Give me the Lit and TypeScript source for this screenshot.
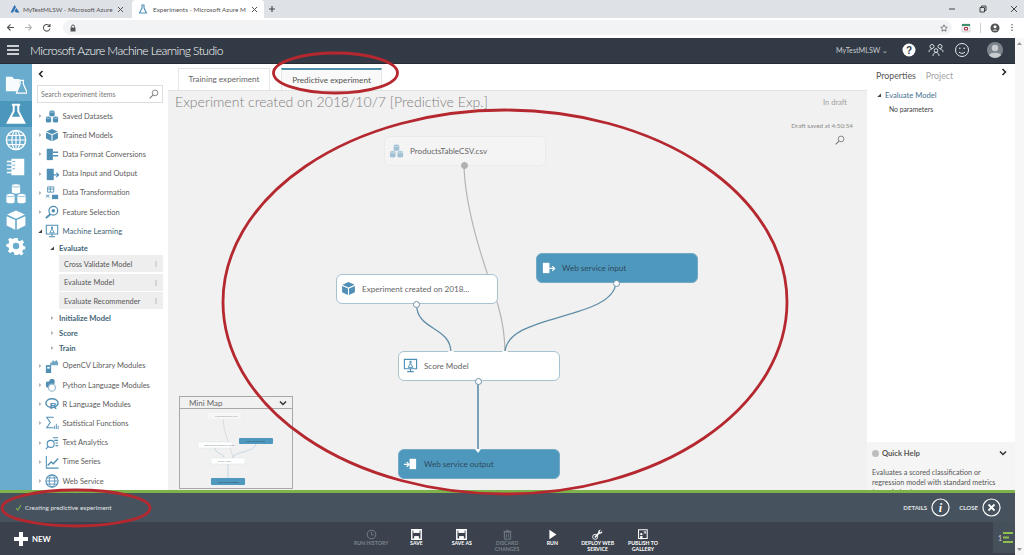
import { LitElement, html, css, svg } from "lit";
import { customElement } from "lit/decorators.js";

const B = "#4f8fb5";
const cyl = (x: number, y: number, c: string, s = "#fff") => svg`<path d="M${x} ${y+1.5}v5c0 1.2 6 1.2 6 0v-5z" fill="${c}"/><ellipse cx="${x+3}" cy="${y+1.5}" rx="3" ry="1.2" fill="${c}" stroke="${s}" stroke-width=".5"/>`;
const cube = (c: string) => svg`<path d="M8 1l6.500 3L8 7 1.500 4z" fill="${c}"/><path d="M1.200 5.200L7.400 8v7l-6.200-3zM14.800 5.200L8.600 8v7l6.200-3z" fill="${c}"/>`;
const pIcons: Record<string, any> = {
  datasets: svg`${cyl(5,1,B)}${cyl(1,8,B)}${cyl(9,8,B)}`,
  cube: cube(B),
  format: svg`<path d="M2 2h7v13H2z" fill="${B}"/><path d="M9 6h6M9 10h6" stroke="${B}" stroke-width="1.500"/>`,
  io: svg`<path d="M2 2h8v13H2z" fill="${B}"/><path d="M9 9h6m-2-2.500l2.500 2.500-2.500 2.500" fill="none" stroke="${B}" stroke-width="1.300"/>`,
  transform: svg`<path d="M3 1h7v6H3z" fill="none" stroke="${B}"/><path d="M3 3.500h7M6 1v6M1 13l4-3M1 10l4 3" stroke="${B}"/><path d="M8 10h7v5H8z" fill="${B}"/>`,
  feature: svg`<circle cx="9.500" cy="6.500" r="5" fill="none" stroke="${B}" stroke-width="1.400"/><circle cx="9.500" cy="6.500" r="2" fill="${B}"/><path d="M6 10.500L1 15" stroke="${B}" stroke-width="2.200"/>`,
  ml: svg`<path d="M1.500 1.500h13v10h-13zM8 11.500V14M4.500 14.500h7" fill="none" stroke="${B}" stroke-width="1.200"/><path d="M7 3.500h2M7.500 3.500v3L5.500 10h5l-2-3.500v-3" fill="none" stroke="${B}"/>`,
  opencv: svg`<path d="M1 7h6v9H1z" fill="${B}"/><path d="M6 4h2l1-3 2 2 2-2 2 3v3H6z" fill="${B}" opacity=".8"/><path d="M2.500 9h3v2h-3z" fill="#fff"/>`,
  py: svg`<path d="M8 1c-3 0-3 1.500-3 3H3C1 4 1 6 1 8s1 3 2 3h1.500V9c0-1 1-2 2-2h3c1 0 1.500-1 1.500-2V3c0-1.500-1.500-2-3-2z" fill="${B}"/><circle cx="8" cy="11" r="4" fill="none" stroke="#9bbdd2" stroke-width="1.500"/>`,
  r: svg`<ellipse cx="8" cy="7" rx="7" ry="5" fill="none" stroke="${B}" stroke-width="1.600"/><text x="5.500" y="14" font-size="11" font-weight="700" font-family="Liberation Sans, sans-serif" fill="${B}">R</text>`,
  stat: svg`<path d="M10 1.500H2l4 6-4 6h8" fill="none" stroke="${B}" stroke-width="1.200"/><path d="M11 11v4M13 9v6M15 11v4" stroke="${B}"/>`,
  text: svg`<circle cx="6.500" cy="9" r="4" fill="none" stroke="${B}" stroke-width="1.200"/><path d="M3.500 12L1 15M9 2h6M10.500 5h4.500M12 8h3M12 11h3" stroke="${B}" stroke-width="1.200"/>`,
  time: svg`<path d="M1.500 1v14h14" fill="none" stroke="${B}" stroke-width="1.200"/><path d="M3 12l4-4 2.500 2L15 4" fill="none" stroke="${B}" stroke-width="1.500"/>`,
  globe: svg`<circle cx="8" cy="8" r="7" fill="none" stroke="${B}" stroke-width="1.200"/><ellipse cx="8" cy="8" rx="3.200" ry="7" fill="none" stroke="${B}"/><path d="M1 8h14M2 4.500h12M2 11.500h12" stroke="${B}"/>`,
};
const pIcon = (k: string) => html`<svg class="picon" viewBox="0 0 16 16">${pIcons[k]}</svg>`;

const W = "#fff";
const railIcons = [
  svg`<path d="M1 4h7l2 2.500h6V20H1z" fill="${W}" opacity=".95"/><path d="M15.500 8h5M16.500 8v4L12.500 22h12L20 12V8" fill="#6aaccd" stroke="${W}" stroke-width="1.300"/>`,
  svg`<path d="M7.500 2h9M9.500 2v7L3 21.500h18L14.500 9V2" fill="none" stroke="${W}" stroke-width="2.200"/><path d="M7 15h10l3 6H4z" fill="${W}"/>`,
  svg`<circle cx="12" cy="12" r="10.500" fill="none" stroke="${W}" stroke-width="1.600"/><ellipse cx="12" cy="12" rx="4.500" ry="10.500" fill="none" stroke="${W}" stroke-width="1.300"/><path d="M1.500 12h21M3.500 7h17M3.500 17h17M12 2v20" stroke="${W}" stroke-width="1.300"/>`,
  svg`<path d="M7 3h14v18H7z" fill="${W}"/><path d="M2 6h7M2 10h7M2 14h7M2 18h7" stroke="${W}" stroke-width="1.500"/><path d="M8 6h3M8 10h3M8 14h3" stroke="#6aaccd" stroke-width="1"/>`,
  svg`<g transform="scale(1.500)">${cyl(5,1,W,"#6aaccd")}${cyl(1,8,W,"#6aaccd")}${cyl(9,8,W,"#6aaccd")}</g>`,
  svg`<g transform="scale(1.500)">${cube(W)}</g>`,
  svg`<path d="M10 2h4l.5 3 2.500 1 2.500-1.800 2.500 3-1.800 2.300.8 2.500 2.500.5-.2 3.500-2.800.5-1 2.300 1.800 2.500-2.800 2.500-2.400-1.800-2.500 1L14 23h-4l-.5-3-2.500-1-2.500 1.800-2.700-2.800L3.600 16l-1-2.500L0 13V9.500L2.700 9l1-2.500L2 4.200 4.700 1.600 7 3.400 9.500 2.500z" fill="${W}" transform="translate(1.500 1.500) scale(.88)"/><circle cx="12" cy="12" r="3.500" fill="#6aaccd"/>`,
];

const top1 = [
  ["datasets", "Saved Datasets"], ["cube", "Trained Models"], ["format", "Data Format Conversions"],
  ["io", "Data Input and Output"], ["transform", "Data Transformation"], ["feature", "Feature Selection"],
];
const top2 = [
  ["opencv", "OpenCV Library Modules"], ["py", "Python Language Modules"], ["r", "R Language Modules"],
  ["stat", "Statistical Functions"], ["text", "Text Analytics"], ["time", "Time Series"], ["globe", "Web Service"],
];

const collapsed = html`<svg class="tw" viewBox="0 0 6 6"><path d="M2 1l2.500 2L2 5z" fill="#b5b5b5"/></svg>`;
const open = html`<svg class="tw" viewBox="0 0 6 6"><path d="M5 1.500V5H1.200z" fill="#444"/></svg>`;
const mag = (c: string) => html`<svg class="mag" viewBox="0 0 14 14"><circle cx="8.500" cy="5.500" r="4" fill="none" stroke="${c}" stroke-width="1.200"/><path d="M5.500 8.500L1 13" stroke="${c}" stroke-width="1.500"/></svg>`;
const chevL = html`<svg class="chev" viewBox="0 0 8 8"><path d="M5.500 1L2.500 4l3 3" fill="none" stroke="#222" stroke-width="1.500"/></svg>`;
const chevR = html`<svg class="chev" viewBox="0 0 8 8"><path d="M2.500 1l3 3-3 3" fill="none" stroke="#222" stroke-width="1.500"/></svg>`;
const chevD = html`<svg class="chev" viewBox="0 0 8 8"><path d="M1 2.500l3 3 3-3" fill="none" stroke="#333" stroke-width="1.500"/></svg>`;

const floppy = html`<svg viewBox="0 0 14 14"><path d="M1 1h12v12H1z" fill="none" stroke="#fff" stroke-width="1.800"/><path d="M3 1h8v4H3z" fill="#fff"/><path d="M4 9h6v4H4z" fill="#fff"/></svg>`;
const cmds = [
  { l: ["RUN HISTORY"], dim: true, i: html`<svg viewBox="0 0 14 14"><circle cx="7" cy="7" r="5.500" fill="none" stroke="#79828b" stroke-width="1.200"/><path d="M7 3.500V7.500H10" fill="none" stroke="#79828b"/></svg>` },
  { l: ["SAVE"], i: floppy },
  { l: ["SAVE AS"], i: floppy },
  { l: ["DISCARD", "CHANGES"], dim: true, i: html`<svg viewBox="0 0 14 14"><path d="M3 4h8v9H3zM2 3h10M5.500 1.500h3" fill="none" stroke="#79828b" stroke-width="1.100"/><path d="M5.500 6v5M8.500 6v5" stroke="#79828b"/></svg>` },
  { l: ["RUN"], i: html`<svg viewBox="0 0 14 14"><path d="M3 1l9 6-9 6z" fill="#fff"/></svg>` },
  { l: ["DEPLOY WEB", "SERVICE"], i: html`<svg viewBox="0 0 14 14"><path d="M13 2.500l-2 2-1.500-1.500 2-2c-2-.5-4 1-3.500 3.500L3 10l1.500 1.500L9.500 6c2.500.5 4-1.500 3.500-3.500z" fill="#fff"/><circle cx="4" cy="10" r="3.200" fill="none" stroke="#fff" stroke-width="1.100"/></svg>` },
  { l: ["PUBLISH TO", "GALLERY"], i: html`<svg viewBox="0 0 14 14"><path d="M2 1h11v11H2z" fill="none" stroke="#fff" stroke-width="1.300"/><path d="M4 9h3v4H4z" fill="#fff"/><circle cx="5.500" cy="6.500" r="1.500" fill="#fff"/><path d="M8.500 3.500h2.500V6M11 3.500L8.500 6" stroke="#fff" fill="none"/></svg>` },
];

@customElement("app-root")
export class AppRoot extends LitElement {
  static styles = css`
    :host { display: block; width: 1024px; height: 555px; overflow: hidden; position: relative; background: #fff;
      font-family: Lato, "Noto Sans", sans-serif; color: #555; }
    * { box-sizing: border-box; }
    svg { display: block; }
    .tabstrip { height: 18px; background: #dee1e6; display: flex; align-items: stretch; font-size: 6.400px; color: #555; }
    .btab { width: 132px; display: flex; align-items: center; padding: 0 8px 0 10px; gap: 3px; white-space: nowrap; overflow: hidden; }
    .btab.active { background: #fff; border-radius: 4px 4px 0 0; padding-left: 6px; gap: 5px; }
    .btab span { flex: 1; }
    .btab svg { width: 10px; height: 10px; flex: none; }
    .btab .x { width: 7px; height: 7px; }
    .plus { width: 8px; height: 8px; margin: 5px 0 0 4px; }
    .winbtns { margin-left: auto; display: flex; gap: 23px; padding: 5px 6px 0 0; }
    .winbtns svg { width: 8px; height: 8px; }
    .toolbar { height: 19.500px; background: #fff; display: flex; align-items: center; padding: 0 9px 0 6px; gap: 9px; }
    .toolbar > svg { width: 9px; height: 9px; flex: none; }
    .addr { flex: 1; height: 15px; border-radius: 8px; background: #f1f3f4; margin-left: 3px; display: flex; align-items: center; padding: 0 4px 0 6px; justify-content: space-between; }
    .addr svg { width: 8px; height: 8px; }
    .toolbar .tb-r { width: 10px; height: 10px; }
    .sep { width: 1px; height: 10px; background: #ccc; }
    .page { display: flex; height: 517.500px; }
    .col { width: 1015px; display: flex; flex-direction: column; }
    .header { height: 26px; flex: none; background: #323a45; border-bottom: 1px solid #262c34; display: flex; align-items: center; color: #e6e8ea; }
    .ham { width: 12px; height: 10px; margin: 0 0 0 7px; }
    .brand { font-size: 12px; font-weight: 300; letter-spacing: -.52px; margin-left: 11px; color: #fff; white-space: nowrap; }
    .hr { margin-left: auto; display: flex; align-items: center; }
    .wsname { font-size: 7.200px; color: #c7ccd1; margin-right: 13px; white-space: nowrap; }
    .hr svg { width: 16px; height: 16px; }
    .avatar { width: 20px; height: 20px; margin-left: 17px; margin-right: 12px; }
    .main { height: 426.500px; flex: none; display: flex; }
    .rail { width: 32px; background: #6aaccd; display: flex; flex-direction: column; }
    .rail div { height: 26.500px; display: flex; align-items: center; justify-content: center; }
    .rail div.first { height: 37px; padding-top: 3px; }
    .rail div.sel { background: #4b96bb; }
    .rail svg { width: 22px; height: 22px; }
    .palette { width: 136px; background: #fff; padding: 0 5.500px 0 5px; display: flex; flex-direction: column; }
    .chev { width: 8px; height: 8px; }
    .pal-top { height: 21px; display: flex; align-items: center; }
    .search { height: 18px; border: 1px solid #ddd; display: flex; align-items: center; justify-content: space-between; padding: 0 3px; font-size: 6.900px; color: #777; margin-bottom: 3.500px; white-space: nowrap; }
    .mag { width: 9px; height: 9px; }
    .search .mag { width: 10px; height: 10px; }
    .row { height: 19.200px; display: flex; align-items: center; padding-top: 1px; font-size: 7.500px; color: #5c5c5c; white-space: nowrap; }
    .row.active { color: #3f6478; font-size: 7.700px; }
    .tw { width: 6px; height: 6px; flex: none; margin-right: 2px; }
    .picon { width: 14px; height: 14px; flex: none; margin-right: 3.500px; }
    .sub { height: 15px; display: flex; align-items: center; padding-left: 12px; font-size: 7.600px; color: #3f6478; font-weight: 700; white-space: nowrap; }
    .sub .tw { margin-right: 4px; }
    .leaf { height: 17px; margin: 0 0 1.500px 22px; background: #eeeeee; font-size: 7.400px; color: #555; display: flex; align-items: center; justify-content: space-between; padding: 1px 6px 0 5px; white-space: nowrap; }
    .leaf i { width: 2px; height: 6px; background: #d5d5d5; }
    .center { width: 699px; display: flex; flex-direction: column; }
    .tabs { height: 27.500px; flex: none; display: flex; align-items: flex-end; padding-left: 10px; gap: 11px; border-bottom: 1px solid #e3e3e3; }
    .tab { height: 22.500px; border: 1px solid #e6e6e6; border-bottom: none; font-size: 8.200px; display: flex; align-items: center; justify-content: center; color: #666; white-space: nowrap; }
    .tab.t1 { width: 92px; }
    .tab.t2 { width: 101px; border-top: 2px solid #4f8fa8; color: #555; background: #f9f9f9; }
    .canvas { flex: 1; background: #f1f1f1; position: relative; }
    .title { position: absolute; left: 7px; top: 1.500px; font-size: 14.100px; color: #808080; white-space: nowrap; font-weight: 300; }
    .indraft { position: absolute; right: 20px; top: 6px; font-size: 7.600px; color: #a0a0a0; white-space: nowrap; }
    .saved { position: absolute; right: 14px; top: 30.500px; font-size: 6.300px; color: #8a8a8a; white-space: nowrap; }
    .canvas > .mag { position: absolute; left: 667px; top: 44px; width: 10px; height: 10px; }
    .edges { position: absolute; left: 0; top: 0; width: 699px; height: 399px; pointer-events: none; }
    .node { position: absolute; width: 162px; height: 30px; border-radius: 6px; display: flex; align-items: center; padding: 0 0 1px 4px; gap: 6px; font-size: 8.100px; color: #666; background: #fff; border: 1px solid #a9c2d0; white-space: nowrap; }
    .node svg { width: 15px; height: 15px; }
    .node.blue { background: #4f98bd; color: #2c4a5e; border-color: #74a9c5; }
    .node.ghost { background: #f4f4f4; border-color: #ebebeb; }
    .port { position: absolute; width: 7px; height: 7px; border-radius: 50%; background: #fff; border: 1px solid #6d93a9; }
    .port.g { background: #b0b0b0; border-color: #b0b0b0; }
    .inp { position: absolute; width: 0; height: 0; border-left: 3px solid transparent; border-right: 3px solid transparent; border-top: 4px solid #fff; }
    .minimap { position: absolute; left: 11px; top: 305px; width: 114px; height: 93px; border: 1px solid #a8a8a8; background: #f1f1f1; }
    .mm-h { height: 12px; border-bottom: 1px solid #a8a8a8; display: flex; align-items: center; justify-content: space-between; font-size: 8px; color: #666; padding: 0 5px 0 9px; }
    .minimap > svg { width: 112px; height: 79px; }
    .right { width: 148px; background: #fff; display: flex; flex-direction: column; }
    .props { height: 378.500px; padding: 0 9px; position: relative; }
    .ptabs { display: flex; gap: 10px; font-size: 8.800px; padding-top: 0; color: #555; height: 23px; align-items: center; }
    .ptabs b { font-weight: 400; color: #a3a3a3; }
    .ptabs .chev { margin-left: auto; margin-top: -6px; margin-right: -2px; }
    .pm { display: flex; align-items: center; font-size: 7.600px; color: #3f7090; margin-top: 3px; }
    .pm .tw { margin-right: 3px; }
    .np { font-size: 6.800px; color: #444; margin: 5px 0 0 13px; }
    .qh { flex: 1; background: #f5f5f5; padding: 5px; overflow: hidden; }
    .qh-h { display: flex; align-items: center; font-size: 7.600px; font-weight: 700; color: #555; gap: 3px; height: 12px; }
    .qh-h .q { width: 7px; height: 7px; border-radius: 50%; background: #bdbdbd; }
    .qh-h .chev { margin-left: auto; margin-right: 3px; }
    .qh p { margin: 9px 0 0; font-size: 7.200px; line-height: 10px; color: #555; width: 142px; }
    .scroll { width: 9px; background: #f7f7f7; display: flex; flex-direction: column; justify-content: space-between; align-items: center; padding: 4px 0; }
    .scroll svg { width: 5px; height: 3px; }
    .status { height: 32px; flex: none; background: #46535e; border-top: 3px solid #7fb24a; display: flex; align-items: center; color: #e0e4e7; font-size: 6.400px; padding-left: 15px; white-space: nowrap; }
    .status > svg.ck { width: 7px; height: 7px; margin-right: 3px; }
    .st-r { margin-left: auto; display: flex; align-items: center; font-size: 6.100px; font-weight: 700; margin-right: 14px; }
    .st-r svg { width: 19px; height: 19px; margin: 0 9px 0 4px; }
    .st-r svg:last-child { margin-right: 0; }
    .cmd { height: 33px; flex: none; background: #3b424d; display: flex; }
    .new { width: 348.500px; display: flex; align-items: center; padding-left: 14px; color: #fff; font-size: 7.800px; font-weight: 700; gap: 4px; }
    .new svg { width: 14px; height: 14px; }
    .cb { width: 45.300px; display: flex; flex-direction: column; align-items: center; font-size: 5.200px; color: #fff; line-height: 5.500px; padding-top: 7px; white-space: nowrap; font-weight: 700; }
    .cb svg { width: 11px; height: 11px; margin-bottom: 1px; }
    .cb.dim { color: #79828b; }
    .count { margin-left: auto; width: 22px; height: 31px; background: #46505a; display: flex; align-items: center; justify-content: flex-end; padding-right: 2px; font-size: 7px; color: #cfd3d6; gap: 1px; }
    .count svg { width: 10px; height: 11px; }
    .marks { position: absolute; left: 0; top: 0; width: 1024px; height: 555px; pointer-events: none; }
  `;

  render() {
    return html`
      <div class="tabstrip">
        <div class="btab">
          <svg viewBox="0 0 10 10"><path d="M4.500 1L.5 8.500h2.500L6 3zM6.300 4L4.500 7l1.500 1.500H9.500z" fill="#2f6fb0"/></svg>
          <span>MyTestMLSW - Microsoft Azure</span>
          <svg class="x" viewBox="0 0 7 7"><path d="M1 1l5 5M6 1L1 6" stroke="#555"/></svg>
        </div>
        <div class="btab active">
          <svg viewBox="0 0 10 10"><path d="M3.500 1h3M4 1v3L1.500 9h7L6 4V1" fill="none" stroke="#4f8fb5" stroke-width="1.100"/></svg>
          <span>Experiments - Microsoft Azure M</span>
          <svg class="x" viewBox="0 0 7 7"><path d="M1 1l5 5M6 1L1 6" stroke="#555"/></svg>
        </div>
        <svg class="plus" viewBox="0 0 8 8"><path d="M4 1v6M1 4h6" stroke="#444" stroke-width="1.100"/></svg>
        <div class="winbtns">
          <svg viewBox="0 0 8 8"><path d="M1 4h6" stroke="#444"/></svg>
          <svg viewBox="0 0 8 8"><path d="M1 2.500h4.500V7H1zM2.500 2.500V1H7v4.500H5.500" fill="none" stroke="#444"/></svg>
          <svg viewBox="0 0 8 8"><path d="M1 1l6 6M7 1L1 7" stroke="#444"/></svg>
        </div>
      </div>
      <div class="toolbar">
        <svg viewBox="0 0 9 9"><path d="M8 4.500H1.500M4.500 1.500l-3 3 3 3" fill="none" stroke="#555" stroke-width="1.100"/></svg>
        <svg viewBox="0 0 9 9"><path d="M1 4.500h6.500M4.500 1.500l3 3-3 3" fill="none" stroke="#b5b5b5" stroke-width="1.100"/></svg>
        <svg viewBox="0 0 9 9"><path d="M7.500 3A3.300 3.300 0 1 0 8 5.500M8 1v2.500H5.500" fill="none" stroke="#555" stroke-width="1.100"/></svg>
        <div class="addr">
          <svg viewBox="0 0 8 8"><path d="M1.500 3.500h5V7.500h-5z" fill="#555"/><path d="M2.500 3.500V2.500a1.500 1.500 0 0 1 3 0v1" fill="none" stroke="#555"/></svg>
          <svg viewBox="0 0 8 8"><path d="M4 .8l1 2.200 2.300.3-1.700 1.600.4 2.300L4 6.100 2 7.200l.4-2.300L.7 3.300 3 3z" fill="none" stroke="#555" stroke-width=".7"/></svg>
        </div>
        <svg class="tb-r" viewBox="0 0 10 10"><path d="M1 1h8v8H1z" fill="#eee" stroke="#bbb" stroke-width=".5"/><path d="M1 1h8v2H1z" fill="#3f8f6b"/><path d="M3.500 4.500h3v2.500h-3z" fill="none" stroke="#b0344b"/></svg>
        <div class="sep"></div>
        <svg class="tb-r" viewBox="0 0 10 10"><circle cx="5" cy="5" r="4.500" fill="#555"/><circle cx="5" cy="3.800" r="1.500" fill="#fff"/><path d="M2.500 7.500a3 2 0 0 1 5 0z" fill="#fff"/></svg>
        <svg style="width:6px" viewBox="0 0 6 10"><circle cx="3" cy="2" r=".8" fill="#555"/><circle cx="3" cy="5" r=".8" fill="#555"/><circle cx="3" cy="8" r=".8" fill="#555"/></svg>
      </div>
      <div class="page">
        <div class="col">
          <div class="header">
            <svg class="ham" viewBox="0 0 12 10"><path d="M0 1h12M0 5h12M0 9h12" stroke="#fff" stroke-width="1.300"/></svg>
            <div class="brand">Microsoft Azure Machine Learning Studio</div>
            <div class="hr">
              <div class="wsname">MyTestMLSW ⌄</div>
              <svg viewBox="0 0 16 16"><circle cx="8" cy="8" r="6.500" fill="#fff"/><text x="8" y="11.500" text-anchor="middle" font-size="10" font-weight="700" font-family="Liberation Sans, sans-serif" fill="#323a45">?</text></svg>
              <svg style="margin-left:11px" viewBox="0 0 16 16"><g fill="none" stroke="#e6e8ea" stroke-width=".9"><circle cx="4" cy="4.500" r="2"/><circle cx="12" cy="4.500" r="2"/><circle cx="8" cy="8.500" r="1.800"/><path d="M1 10c0-2 1-3 3-3M15 10c0-2-1-3-3-3M5 14c0-2 1-3.500 3-3.500s3 1.500 3 3.500"/></g></svg>
              <svg style="margin-left:10px" viewBox="0 0 16 16"><g fill="none" stroke="#e6e8ea"><circle cx="8" cy="8" r="6.500"/><path d="M5 10c1.500 1.800 4.500 1.800 6 0"/></g><circle cx="5.800" cy="6.300" r=".8" fill="#e6e8ea"/><circle cx="10.200" cy="6.300" r=".8" fill="#e6e8ea"/></svg>
              <svg class="avatar" viewBox="0 0 20 20"><circle cx="10" cy="10" r="10" fill="#7d858c"/><circle cx="10" cy="7.500" r="4" fill="#c9cdd0"/><path d="M2.500 16.500C4 12.500 16 12.500 17.500 16.500A10 10 0 0 1 2.500 16.500z" fill="#c9cdd0"/></svg>
            </div>
          </div>
          <div class="main">
            <div class="rail">
              ${railIcons.map((ic, i) => html`<div class="${i === 0 ? "first" : i === 1 ? "sel" : ""}"><svg viewBox="0 0 24 24">${ic}</svg></div>`)}
            </div>
            <div class="palette">
              <div class="pal-top">${chevL}</div>
              <div class="search"><span>Search experiment items</span>${mag("#777")}</div>
              ${top1.map(([k, t]) => html`<div class="row">${collapsed}${pIcon(k)}${t}</div>`)}
              <div class="row active">${open}${pIcon("ml")}Machine Learning</div>
              <div class="sub">${open}Evaluate</div>
              <div class="leaf">Cross Validate Model<i></i></div>
              <div class="leaf">Evaluate Model<i></i></div>
              <div class="leaf">Evaluate Recommender<i></i></div>
              <div class="sub">${collapsed}Initialize Model</div>
              <div class="sub">${collapsed}Score</div>
              <div class="sub">${collapsed}Train</div>
              ${top2.map(([k, t]) => html`<div class="row">${collapsed}${pIcon(k)}${t}</div>`)}
            </div>
            <div class="center">
              <div class="tabs">
                <div class="tab t1">Training experiment</div>
                <div class="tab t2">Predictive experiment</div>
              </div>
              <div class="canvas">
                <div class="title">Experiment created on 2018/10/7 [Predictive Exp.]</div>
                <div class="indraft">In draft</div>
                <div class="saved">Draft saved at 4:50:54</div>
                ${mag("#777")}
                <svg class="edges" viewBox="0 0 699 399">
                  <path d="M296 74C297 125 322 190 330 214C334 228 337 245 337 262" fill="none" stroke="#b5b5b5" stroke-width="1.200"/>
                  <path d="M248.500 213C248.500 240 283 235 283 262" fill="none" stroke="#5f8ea8" stroke-width="1.300"/>
                  <path d="M448 192C444 230 337 222 337 262" fill="none" stroke="#5f8ea8" stroke-width="1.300"/>
                  <path d="M310 290V360" fill="none" stroke="#5f8ea8" stroke-width="1.600"/>
                </svg>
                <div class="node ghost" style="left:216px;top:45px">
                  <svg viewBox="0 0 16 16" opacity=".5">${pIcons.datasets}</svg>ProductsTableCSV.csv
                </div>
                <div class="port g" style="left:292.500px;top:70.500px"></div>
                <div class="node" style="left:168px;top:183px">
                  <svg viewBox="0 0 16 16">${pIcons.cube}</svg>Experiment created on 2018...
                </div>
                <div class="port" style="left:245px;top:209.500px"></div>
                <div class="node blue" style="left:368px;top:162px">
                  <svg viewBox="0 0 16 16"><path d="M2 3h7v11H2z" fill="#fff"/><path d="M9 9h5m-2-2.500l2.500 2.500-2.500 2.500" fill="none" stroke="#fff" stroke-width="1.300"/></svg>Web service input
                </div>
                <div class="port" style="left:444.500px;top:188.500px"></div>
                <div class="node" style="left:230px;top:260px">
                  <svg viewBox="0 0 16 16">${pIcons.ml}</svg>Score Model
                </div>
                <div class="inp" style="left:280px;top:260px"></div>
                <div class="inp" style="left:334px;top:260px"></div>
                <div class="port" style="left:306.500px;top:286.500px"></div>
                <div class="node blue" style="left:230px;top:358px">
                  <svg viewBox="0 0 16 16"><path d="M7 3h7v11H7z" fill="#fff"/><path d="M1 9h5M4 6.500L6.500 9 4 11.500" fill="none" stroke="#fff" stroke-width="1.300"/></svg>Web service output
                </div>
                <div class="inp" style="left:307px;top:358px"></div>
                <div class="minimap">
                  <div class="mm-h">Mini Map ${chevD}</div>
                  <svg viewBox="0 0 112 79">
                    <path d="M43 10C44 25 50 35 53 49" fill="none" stroke="#ccc" stroke-width=".6"/>
                    <path d="M35 39C35 45 44 44 44 49M76 35C74 44 53 42 53 49M48 55V69" fill="none" stroke="#a9c6d6" stroke-width=".6"/>
                    <g font-size="2.400" font-family="Lato, sans-serif">
                      <rect x="28" y="4" width="33" height="6" fill="#f6f6f6"/><text x="35" y="8" fill="#999">ProductsTableCSV.csv</text>
                      <rect x="18" y="33" width="34" height="6" rx="1" fill="#fff" stroke="#dbe5ea" stroke-width=".5"/><text x="24" y="37" fill="#888">Experiment created on 2018...</text>
                      <rect x="59" y="29" width="34" height="6" rx="1" fill="#4f98bd"/><text x="66" y="33" fill="#2c4a5e">Web service input</text>
                      <rect x="31" y="49" width="34" height="6" rx="1" fill="#fff" stroke="#dbe5ea" stroke-width=".5"/><text x="38" y="53" fill="#888">Score Model</text>
                      <rect x="31" y="69" width="34" height="7" rx="1" fill="#4f98bd"/><text x="38" y="73.500" fill="#2c4a5e">Web service output</text>
                    </g>
                  </svg>
                </div>
              </div>
            </div>
            <div class="right">
              <div class="props">
                <div class="ptabs"><span>Properties</span><b>Project</b>${chevR}</div>
                <div class="pm">${open}Evaluate Model</div>
                <div class="np">No parameters</div>
              </div>
              <div class="qh">
                <div class="qh-h"><span class="q"></span>Quick Help ${chevD}</div>
                <p>Evaluates a scored classification or regression model with standard metrics (more help...)</p>
              </div>
            </div>
          </div>
          <div class="status">
            <svg class="ck" viewBox="0 0 7 7"><path d="M1 4l1.800 2L6 1" fill="none" stroke="#7fb24a" stroke-width="1.100"/></svg>
            Creating predictive experiment
            <div class="st-r">
              DETAILS
              <svg viewBox="0 0 19 19"><circle cx="9.500" cy="9.500" r="8.500" fill="none" stroke="#fff" stroke-width="1.200"/><text x="9.500" y="14" text-anchor="middle" font-size="12" font-style="italic" font-family="Liberation Serif, serif" font-weight="700" fill="#fff">i</text></svg>
              CLOSE
              <svg viewBox="0 0 19 19"><circle cx="9.500" cy="9.500" r="8.500" fill="none" stroke="#fff" stroke-width="1.200"/><path d="M6.500 6.500l6 6M12.500 6.500l-6 6" stroke="#fff" stroke-width="1.800"/></svg>
            </div>
          </div>
          <div class="cmd">
            <div class="new"><svg viewBox="0 0 14 14"><path d="M5 0h4v5h5v4H9v5H5V9H0V5h5z" fill="#fff"/></svg>NEW</div>
            ${cmds.map((c) => html`<div class="cb ${c.dim ? "dim" : ""}">${c.i}${c.l.map((x) => html`<span>${x}</span>`)}</div>`)}
            <div class="count">1<svg viewBox="0 0 10 11"><path d="M0 1h10M0 5.500h6M0 10h10" stroke="#8fc04f" stroke-width="2"/></svg></div>
          </div>
        </div>
        <div class="scroll">
          <svg viewBox="0 0 5 3"><path d="M2.500 0L5 3H0z" fill="#999"/></svg>
          <svg viewBox="0 0 5 3"><path d="M2.500 3L5 0H0z" fill="#999"/></svg>
        </div>
      </div>
      <svg class="marks" viewBox="0 0 1024 555">
        <g fill="none" stroke="#b5282f" stroke-width="2.800">
          <ellipse cx="505" cy="302" rx="282" ry="192"/>
          <ellipse cx="335.500" cy="73" rx="62" ry="20"/>
          <ellipse cx="76" cy="508" rx="74" ry="18"/>
        </g>
      </svg>
    `;
  }
}
